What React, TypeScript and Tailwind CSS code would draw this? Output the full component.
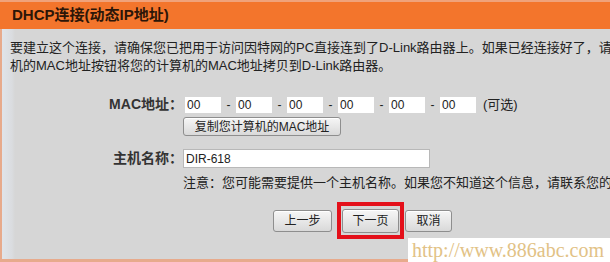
const font = "font-['Tahoma','Liberation_Sans','Noto_Sans_CJK_SC',sans-serif]";

const macParts = ["00", "00", "00", "00", "00", "00"];

function GrayButton({ label, className }: { label: string; className?: string }) {
  return (
    <button
      className={`shrink-0 rounded-[3px] border border-[#8e8e8e] bg-gradient-to-b from-[#f6f6f6] to-[#d9d9d9] text-[12px] text-[#222] shadow-[inset_0_1px_0_#fff] ${className ?? ""}`}
    >
      {label}
    </button>
  );
}

export default function App() {
  return (
    <div className={`relative w-[610px] h-[262px] overflow-hidden bg-[#d6d6d6] ${font}`}>
      {/* header bar */}
      <div className="h-[29px] border-t-2 border-[#f0a27a] bg-[#f3752c] flex items-center pl-[12px]">
        <span className="text-[15px] font-bold text-[#2c1608]">DHCP连接(动态IP地址)</span>
      </div>

      <div className="h-[233px] flex flex-col border-l-2 border-b-[3px] border-[#e7aa8c] pl-[8px] bg-[linear-gradient(to_right,#e0e4ea_0px,#dadcdf_10px,#d6d6d6_13px)]">
        <div className="pt-[10px] text-[13px] leading-[18px] text-[#222]">
          <p className="whitespace-nowrap">
            要建立这个连接，请确保您已把用于访问因特网的PC直接连到了D-Link路由器上。如果已经连接好了，请
          </p>
          <p className="whitespace-nowrap">机的MAC地址按钮将您的计算机的MAC地址拷贝到D-Link路由器。</p>
        </div>

        <div className="mt-[21px] flex flex-col text-[13px] text-[#222]">
          <div className="flex items-center h-[17px]">
            <div className="w-[173px] text-right font-bold text-[14px] text-[#333]">MAC地址：</div>
            <div className="ml-[2px] flex items-center">
              {macParts.map((v, i) => (
                <div key={i} className="flex items-center">
                  {i > 0 && <span className="w-[15px] text-center text-[12px]">-</span>}
                  <input
                    readOnly
                    value={v}
                    className="w-[36px] h-[16px] bg-white px-[2px] text-[12px] text-[#222] outline-none"
                  />
                </div>
              ))}
              <span className="ml-[7px]">(可选)</span>
            </div>
          </div>

          <div className="mt-[4px] pl-[173px] flex">
            <GrayButton label="复制您计算机的MAC地址" className="w-[158px] h-[19px]" />
          </div>

          <div className="mt-[13px] flex items-center h-[19px]">
            <div className="w-[173px] text-right font-bold text-[14px] text-[#333]">主机名称：</div>
            <input
              readOnly
              value="DIR-618"
              className="w-[247px] h-[19px] border border-[#b8b8b8] bg-white px-[2px] text-[12px] text-[#222] outline-none"
            />
          </div>

          <div className="mt-[7px] pl-[173px] whitespace-nowrap leading-[16px]">
            注意：您可能需要提供一个主机名称。如果您不知道这个信息，请联系您的
          </div>
        </div>

        <div className="mt-[11px] flex items-center pl-[263px]">
          <GrayButton label="上一步" className="w-[59px] h-[22px]" />
          <div className="ml-[5px] shrink-0 border-[4px] border-[#e4101a] px-[1px] py-[2px]">
            <GrayButton label="下一页" className="w-[57px] h-[24px]" />
          </div>
          <GrayButton label="取消" className="ml-[1px] w-[47px] h-[22px]" />
        </div>
      </div>

      {/* watermark */}
      <div className="absolute right-0 bottom-0 w-[202px] h-[24px] bg-white flex items-center pl-[4px]">
        <span className="font-['Liberation_Serif',serif] text-[20px] leading-none text-[#e2c286]">
          http://www.886abc.com
        </span>
      </div>
    </div>
  );
}
